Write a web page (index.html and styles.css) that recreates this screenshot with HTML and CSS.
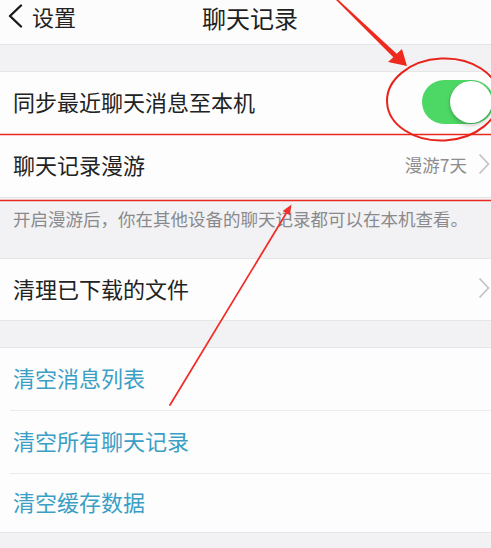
FILE: index.html
```html
<!DOCTYPE html>
<html lang="zh-CN">
<head>
<meta charset="utf-8">
<title>聊天记录</title>
<link rel="stylesheet" href="styles.css">
</head>
<body>
<div class="page">
  <header class="nav">
    <div class="back">
      <svg class="back-icon" width="16" height="24" viewBox="0 0 16 24"><path d="M14 1.5 L3 12 L14 22.5" fill="none" stroke="#1a1a1a" stroke-width="2.4" stroke-linecap="round" stroke-linejoin="round"/></svg>
      <span class="back-text">设置</span>
    </div>
    <div class="title">聊天记录</div>
    <div class="nav-end"></div>
  </header>

  <div class="gap"></div>

  <section class="group">
    <div class="row row-a">
      <span class="label">同步最近聊天消息至本机</span>
      <span class="toggle"><span class="knob"></span></span>
    </div>
    <div class="row row-b sep">
      <span class="label">聊天记录漫游</span>
      <span class="value">漫游7天</span>
      <svg class="chev" width="12" height="22" viewBox="0 0 12 22"><path d="M1.5 1.5 L10.5 11 L1.5 20.5" fill="none" stroke="#c4c4c8" stroke-width="1.8" stroke-linejoin="round"/></svg>
    </div>
  </section>

  <p class="note">开启漫游后，你在其他设备的聊天记录都可以在本机查看。</p>

  <section class="group">
    <div class="row row-d">
      <span class="label">清理已下载的文件</span>
      <svg class="chev" width="12" height="22" viewBox="0 0 12 22"><path d="M1.5 1.5 L10.5 11 L1.5 20.5" fill="none" stroke="#c4c4c8" stroke-width="1.8" stroke-linejoin="round"/></svg>
    </div>
  </section>

  <div class="gap"></div>

  <section class="group">
    <div class="row row-a"><span class="label link">清空消息列表</span></div>
    <div class="row row-b sep"><span class="label link">清空所有聊天记录</span></div>
    <div class="row row-c sep"><span class="label link">清空缓存数据</span></div>
  </section>

  <svg class="marks" width="491" height="548" viewBox="0 0 491 548">
    <line x1="0" y1="134.5" x2="491" y2="134.5" stroke="#ea2a22" stroke-width="1.6"/>
    <line x1="0" y1="200.5" x2="491" y2="200.5" stroke="#ea2a22" stroke-width="1.6"/>
    <ellipse cx="443" cy="99.5" rx="56" ry="41" fill="none" stroke="#e8231b" stroke-width="2" transform="rotate(-3 443 99.5)"/>
    <polygon points="338.5,0 396.7,53.7 402,49 407,66 388,62 393.3,57.3 336,0" fill="#ee2a1f"/>
    <line x1="170" y1="405" x2="287" y2="212" stroke="#f0302a" stroke-width="1.8" stroke-linecap="round"/>
    <polygon points="291.5,204.5 289.9,215.3 282.7,210.9" fill="#f0302a"/>
  </svg>
</div>
</body>
</html>
```

FILE: styles.css
```css
* { box-sizing: border-box; }

html, body {
  margin: 0;
  padding: 0;
  background: #f2f2f4;
  overflow: hidden;
}

body {
  font-family: "Noto Sans CJK SC", "Noto Sans", sans-serif;
  color: #222;
}

.page {
  position: relative;
  width: 491px;
  height: 548px;
  overflow: hidden;
}

.nav {
  height: 45px;
  background: #fcfcfc;
  border-bottom: 1px solid #e3e3e6;
  display: grid;
  grid-template-columns: 1fr auto 1fr;
  align-items: start;
}

.back {
  display: flex;
  align-items: center;
  padding-left: 7px;
  padding-top: 4px;
  gap: 9px;
}

.back-text {
  font-size: 22px;
  line-height: 24px;
  color: #222;
}

.title {
  font-size: 24px;
  line-height: 35px;
  color: #1e1e1e;
  padding-left: 9px;
}

.gap {
  height: 26px;
}

.group {
  background: #fdfdfd;
  border-top: 1px solid #e6e6e8;
  border-bottom: 1px solid #e6e6e8;
}

.row {
  display: flex;
  align-items: center;
  padding-left: 13px;
  padding-bottom: 4px;
  height: 62px;
}

.row-b { height: 63px; }
.row-c { height: 59px; }
.row-d { height: 61px; }

.row.sep {
  border-top: 1px solid #ececee;
  margin-left: 10px;
  padding-left: 3px;
}

.label {
  font-size: 22px;
  line-height: 24px;
  flex: 1;
}

.link {
  color: #3b9fc5;
}

.value {
  font-size: 17.5px;
  color: #8d8d8f;
  margin-right: 11px;
}

.chev {
  margin-right: 1px;
  flex: none;
}

.toggle {
  position: relative;
  flex: none;
  width: 72px;
  height: 44px;
  border-radius: 22px;
  background: #4dd865;
  margin-right: -3px;
  margin-top: 2px;
}

.knob {
  position: absolute;
  right: 2px;
  top: 1px;
  width: 42px;
  height: 42px;
  border-radius: 50%;
  background: #ffffff;
  box-shadow: 0 2px 4px rgba(0, 0, 0, 0.25), 0 0 0 0.5px rgba(0, 0, 0, 0.08);
}

.note {
  margin: 0;
  height: 60px;
  padding: 10px 0 0 13px;
  font-size: 17.5px;
  line-height: 22px;
  color: #8a8a8c;
}

.marks {
  position: absolute;
  left: 0;
  top: 0;
  pointer-events: none;
}
```
